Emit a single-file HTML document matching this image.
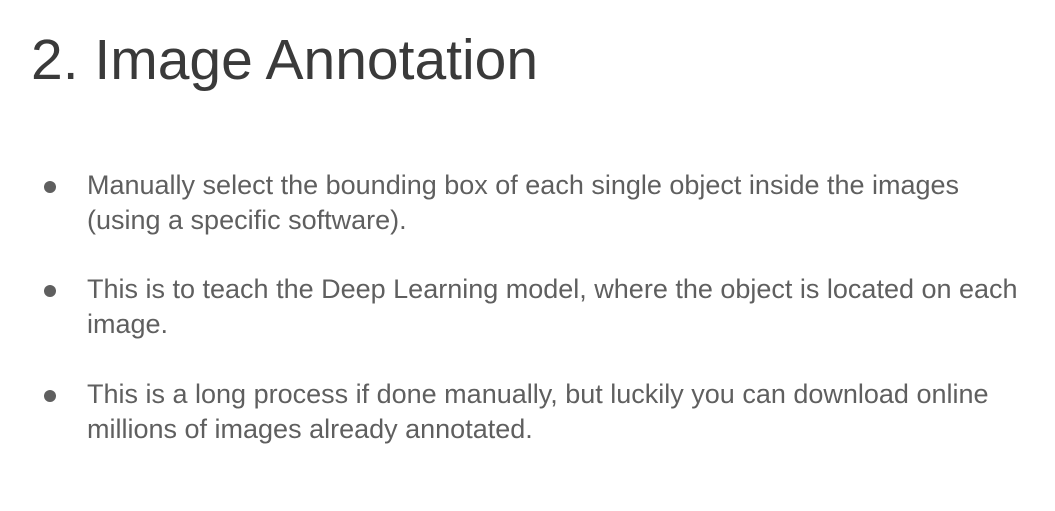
<!DOCTYPE html>
<html><head><meta charset="utf-8"><style>
html,body{margin:0;padding:0;background:#fff;}
body{width:1055px;height:511px;position:relative;overflow:hidden;font-family:"Liberation Sans",sans-serif;}
h1{position:absolute;left:31px;top:27px;margin:0;font-weight:normal;font-size:57px;line-height:66px;color:#3a3a3a;white-space:nowrap;}
.b{position:absolute;left:87px;font-size:27px;line-height:35px;color:#5f5f5f;white-space:nowrap;}
.d{position:absolute;left:44px;width:12px;height:12px;border-radius:50%;background:#5f5f5f;}
</style></head><body>
<h1>2. Image Annotation</h1>
<div class="d" style="top:181px"></div>
<div class="b" style="top:168px">Manually select the bounding box of each single object inside the images<br>(using a specific software).</div>
<div class="d" style="top:285px"></div>
<div class="b" style="top:272px">This is to teach the Deep Learning model, where the object is located on each<br>image.</div>
<div class="d" style="top:390px"></div>
<div class="b" style="top:377px">This is a long process if done manually, but luckily you can download online<br>millions of images already annotated.</div>
</body></html>
